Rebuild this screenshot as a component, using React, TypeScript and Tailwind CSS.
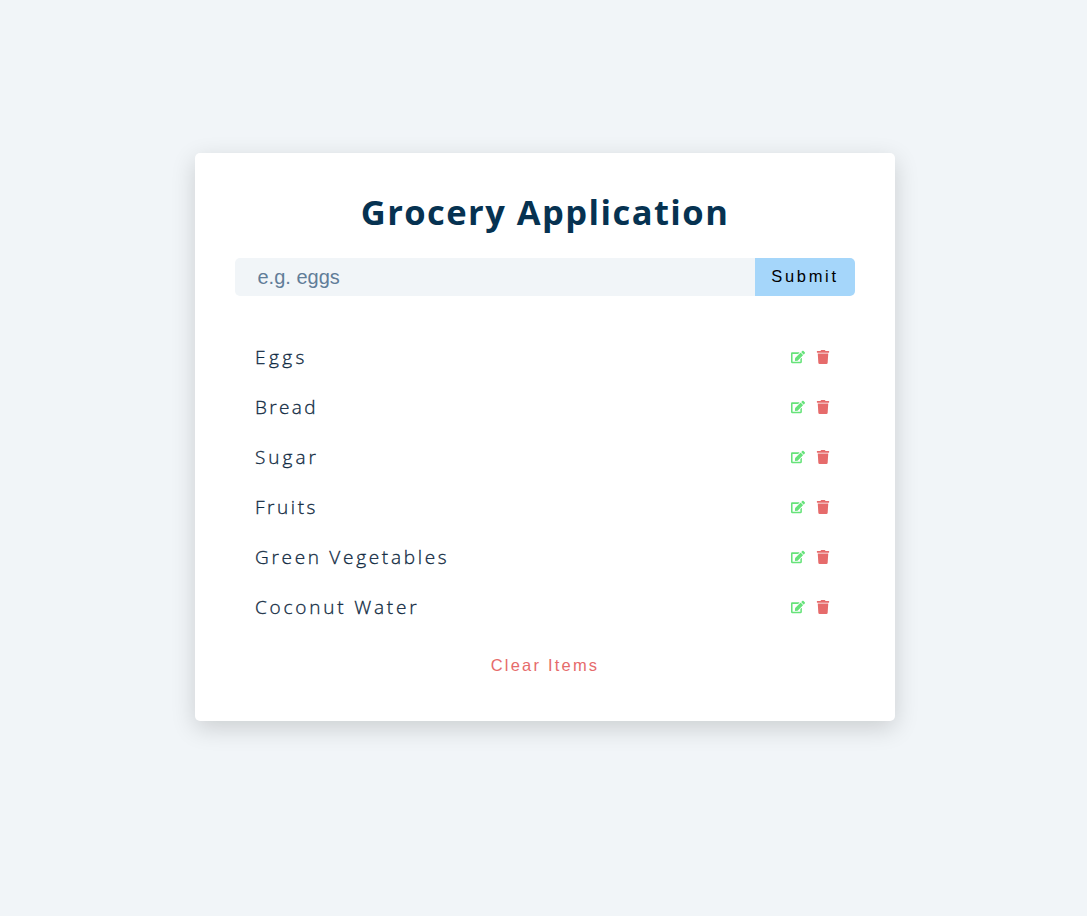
import { FaEdit, FaTrash } from "react-icons/fa";

const items = [
  { title: "Eggs", tracking: "tracking-[3.45px]" },
  { title: "Bread", tracking: "tracking-[2.35px]" },
  { title: "Sugar", tracking: "tracking-[3px]" },
  { title: "Fruits", tracking: "tracking-[2.55px]" },
  { title: "Green Vegetables", tracking: "tracking-[2.7px]" },
  { title: "Coconut Water", tracking: "tracking-[2.8px]" },
];

export default function App() {
  return (
    <main className="min-h-screen bg-[#f1f5f8] pt-[153px] pl-[195px]">
      <section className="flex h-[568px] w-[700px] flex-col rounded-[5px] bg-white px-10 pt-8 font-['Open_Sans',sans-serif] shadow-[0_7px_24px_rgba(0,0,0,0.16)]">
        <h1 className="h-[73px] text-center text-[34.5px] leading-[54px] font-bold tracking-[1.45px] whitespace-nowrap text-[#063251]">
          Grocery Application
        </h1>
        <form className="flex h-[38px] font-['Liberation_Sans',sans-serif]">
          <input
            type="text"
            placeholder="e.g. eggs"
            className="w-[520px] rounded-l-[5px] bg-[#f1f5f8] pl-[22.5px] text-[20px] placeholder:text-[#617d98]"
          />
          <button
            type="button"
            className="w-[100px] rounded-r-[5px] bg-[#a5d6fa] pb-[2px] text-[16.5px] tracking-[2.7px] text-black"
          >
            Submit
          </button>
        </form>
        <ul className="mt-9">
          {items.map((item) => (
            <li key={item.title} className="flex h-[50px] items-center justify-between px-5">
              <p className={"text-[19px] font-light text-[#102a42] [-webkit-text-stroke:0.3px_#102a42] " + item.tracking}>
                {item.title}
              </p>
              <div className="flex items-center gap-[11px] pr-[5px]">
                <button type="button" aria-label="edit">
                  <FaEdit className="size-[14px] text-[#66e37a]" />
                </button>
                <button type="button" aria-label="delete">
                  <FaTrash className="size-[14px] text-[#e66b6b]" />
                </button>
              </div>
            </li>
          ))}
        </ul>
        <button
          type="button"
          className="mt-[21px] self-center font-['Liberation_Sans',sans-serif] text-[16.5px] tracking-[2.2px] text-[#e66b6b]"
        >
          Clear Items
        </button>
      </section>
    </main>
  );
}
